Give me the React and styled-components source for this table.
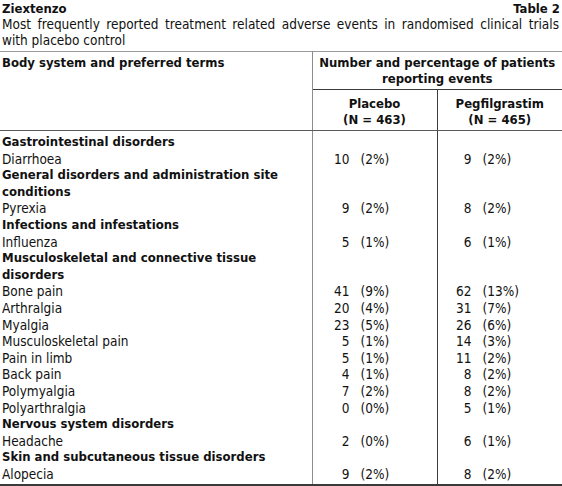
import React from "react";
import styled, { createGlobalStyle } from "styled-components";

const GlobalStyle = createGlobalStyle`
  html, body { margin: 0; padding: 0; background: #ffffff; }
  body {
    font-family: "DejaVu Sans Condensed", "Liberation Sans", Arial, sans-serif;
    font-stretch: condensed;
    font-size: 13.5px;
    color: #111111;
  }
`;

const Page = styled.div`
  width: 562px;
  padding-top: 1px;
`;

const TitleBar = styled.div`
  display: flex;
  justify-content: space-between;
  align-items: baseline;
  padding: 0 2px 0 2px;
  font-weight: 700;
  font-size: 13px;
  line-height: 16px;
`;

const Caption = styled.p`
  margin: 0;
  padding: 0 3px 0 2px;
  line-height: 15.5px;
  text-align: justify;
  text-align-last: left;
`;

const Table = styled.table`
  margin-top: 3px;
  width: 562px;
  border-collapse: collapse;
  table-layout: fixed;
  border-top: 1px solid #9a9a9a;
  border-bottom: 2px solid #3a3a3a;
`;

const HeadCell = styled.th`
  padding: ${(p) => (p.$sub ? "6px 0 2px" : "3px 0 2px")};
  padding-left: ${(p) => (p.$left ? "2px" : "0")};
  font-weight: 700;
  font-size: 13px;
  line-height: 16px;
  vertical-align: top;
  text-align: ${(p) => (p.$left ? "left" : "center")};
  border-right: ${(p) =>
    p.$divider === "light"
      ? "1px solid #8c8c8c"
      : p.$divider === "dark"
      ? "1px solid #3c3c3c"
      : "none"};
  border-bottom: 1px solid ${(p) => (p.$group ? "#3c3c3c" : "#5a5a5a")};
`;

const Row = styled.tr`
  &:first-child td { padding-top: 3px; }
  &:last-child td { padding-bottom: 2px; }
`;

const TermCell = styled.td`
  padding: 0 4px 0 2px;
  line-height: 16.6px;
  font-weight: ${(p) => (p.$category ? 700 : 400)};
  font-size: ${(p) => (p.$category ? "13px" : "13.5px")};
  vertical-align: top;
  border-right: 1px solid #8c8c8c;
`;

const ValueCell = styled.td`
  padding: 0 0 0 ${(p) => p.$indent}px;
  line-height: 16.6px;
  vertical-align: top;
  border-right: ${(p) => (p.$last ? "none" : "1px solid #3c3c3c")};
`;

const Value = styled.span`
  display: flex;
  align-items: baseline;
`;

const Count = styled.span`
  width: 18px;
  text-align: right;
`;

const Pct = styled.span`
  margin-left: 11px;
`;

const rows = [
  { term: "Gastrointestinal disorders", category: true },
  { term: "Diarrhoea", a: ["10", "2%"], b: ["9", "2%"] },
  { term: "General disorders and administration site conditions", category: true },
  { term: "Pyrexia", a: ["9", "2%"], b: ["8", "2%"] },
  { term: "Infections and infestations", category: true },
  { term: "Influenza", a: ["5", "1%"], b: ["6", "1%"] },
  { term: "Musculoskeletal and connective tissue disorders", category: true },
  { term: "Bone pain", a: ["41", "9%"], b: ["62", "13%"] },
  { term: "Arthralgia", a: ["20", "4%"], b: ["31", "7%"] },
  { term: "Myalgia", a: ["23", "5%"], b: ["26", "6%"] },
  { term: "Musculoskeletal pain", a: ["5", "1%"], b: ["14", "3%"] },
  { term: "Pain in limb", a: ["5", "1%"], b: ["11", "2%"] },
  { term: "Back pain", a: ["4", "1%"], b: ["8", "2%"] },
  { term: "Polymyalgia", a: ["7", "2%"], b: ["8", "2%"] },
  { term: "Polyarthralgia", a: ["0", "0%"], b: ["5", "1%"] },
  { term: "Nervous system disorders", category: true },
  { term: "Headache", a: ["2", "0%"], b: ["6", "1%"] },
  { term: "Skin and subcutaneous tissue disorders", category: true },
  { term: "Alopecia", a: ["9", "2%"], b: ["8", "2%"] },
];

function Amount({ v }) {
  if (!v) return null;
  return (
    <Value>
      <Count>{v[0]}</Count>
      <Pct>({v[1]})</Pct>
    </Value>
  );
}

export default function App() {
  return (
    <Page>
      <GlobalStyle />
      <TitleBar>
        <span>Ziextenzo</span>
        <span>Table 2</span>
      </TitleBar>
      <Caption>
        Most frequently reported treatment related adverse events in randomised clinical trials
        with placebo control
      </Caption>
      <Table>
        <colgroup>
          <col style={{ width: 312 }} />
          <col style={{ width: 125 }} />
          <col style={{ width: 125 }} />
        </colgroup>
        <thead>
          <tr>
            <HeadCell $left rowSpan={2} $divider="light">
              Body system and preferred terms
            </HeadCell>
            <HeadCell colSpan={2} $group>
              Number and percentage of patients
              <br />
              reporting events
            </HeadCell>
          </tr>
          <tr>
            <HeadCell $sub $divider="dark">
              Placebo
              <br />
              (N = 463)
            </HeadCell>
            <HeadCell $sub>
              Pegfilgrastim
              <br />
              (N = 465)
            </HeadCell>
          </tr>
        </thead>
        <tbody>
          {rows.map((r) => (
            <Row key={r.term}>
              <TermCell $category={r.category}>{r.term}</TermCell>
              <ValueCell $indent={19}>
                <Amount v={r.a} />
              </ValueCell>
              <ValueCell $indent={16} $last>
                <Amount v={r.b} />
              </ValueCell>
            </Row>
          ))}
        </tbody>
      </Table>
    </Page>
  );
}
